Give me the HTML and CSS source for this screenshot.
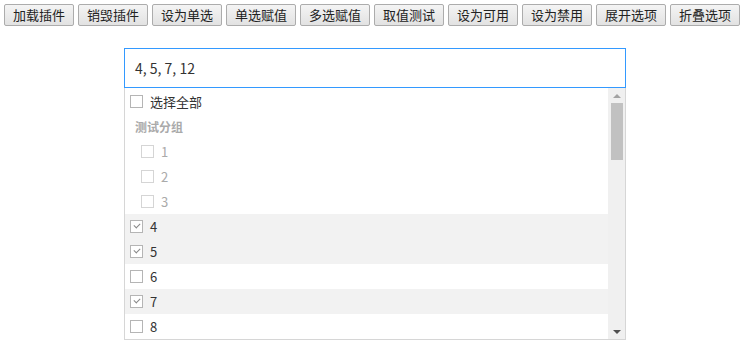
FILE: index.html
```html
<!DOCTYPE html>
<html lang="zh-CN">
<head>
    <meta charset="UTF-8">
    <title>多选下拉测试</title>
    <link rel="stylesheet" href="styles.css">
</head>
<body>
    <div class="toolbar">
        <button class="btn">加载插件</button>
        <button class="btn">销毁插件</button>
        <button class="btn">设为单选</button>
        <button class="btn">单选赋值</button>
        <button class="btn">多选赋值</button>
        <button class="btn">取值测试</button>
        <button class="btn">设为可用</button>
        <button class="btn">设为禁用</button>
        <button class="btn">展开选项</button>
        <button class="btn">折叠选项</button>
    </div>

    <div class="select-box">
        <div class="select-input">4, 5, 7, 12</div>
        <div class="dropdown">
            <ul class="options">
                <li class="option"><span class="check"></span>选择全部</li>
                <li class="group">测试分组</li>
                <li class="option disabled sub"><span class="check"></span>1</li>
                <li class="option disabled sub"><span class="check"></span>2</li>
                <li class="option disabled sub"><span class="check"></span>3</li>
                <li class="option selected"><span class="check checked"></span>4</li>
                <li class="option selected"><span class="check checked"></span>5</li>
                <li class="option"><span class="check"></span>6</li>
                <li class="option selected"><span class="check checked"></span>7</li>
                <li class="option"><span class="check"></span>8</li>
            </ul>
            <div class="scrollbar">
                <span class="arrow up"></span>
                <div class="track"><div class="thumb"></div></div>
                <span class="arrow down"></span>
            </div>
        </div>
    </div>
</body>
</html>
```

FILE: styles.css
```css
body {
    font-family: "Noto Sans CJK SC", "Microsoft YaHei", sans-serif;
    font-size: 13px;
    color: #333;
    background: #fff;
    margin: 0;
    padding: 0;
}

.toolbar {
    display: flex;
    gap: 4px;
    padding: 4px;
}

.btn {
    font-family: inherit;
    font-size: 13px;
    color: #222;
    height: 22px;
    width: 70px;
    padding: 0;
    line-height: 20px;
    border: 1px solid #acacac;
    border-radius: 2px;
    background: linear-gradient(to bottom, #f4f4f4, #e2e2e2);
}

.select-box {
    width: 502px;
    margin: 18px auto 0;
}

.select-input {
    height: 38px;
    line-height: 38px;
    border: 1px solid #3399ff;
    padding: 0 10px;
    font-size: 14px;
    color: #333;
}

.dropdown {
    display: flex;
    height: 251px;
    border: 1px solid #d6d6d6;
    border-top: none;
    overflow: hidden;
}

.options {
    flex: 1;
    list-style: none;
    margin: 0;
    padding: 1px 0 0;
}

.option,
.group {
    height: 25px;
    line-height: 25px;
    padding-left: 5px;
    display: flex;
    align-items: center;
}

.group {
    padding-left: 10px;
    color: #aaa;
    font-weight: bold;
    font-size: 12px;
}

.option.sub {
    padding-left: 16px;
}

.option.disabled {
    color: #aaa;
}

.option.selected {
    background: #f2f2f2;
}

.check {
    width: 11px;
    height: 11px;
    border: 1px solid #b5b5b5;
    background: #fff;
    margin-right: 7px;
    position: relative;
}

.option.disabled .check {
    border-color: #d5d5d5;
}

.check.checked::after {
    content: "";
    position: absolute;
    left: 3px;
    top: 2px;
    width: 5px;
    height: 3px;
    border-left: 1px solid #888;
    border-bottom: 1px solid #888;
    transform: rotate(-45deg);
}

.scrollbar {
    width: 17px;
    background: #f0f0f0;
    display: flex;
    flex-direction: column;
    align-items: center;
}

.arrow {
    width: 0;
    height: 0;
    border-left: 4px solid transparent;
    border-right: 4px solid transparent;
    margin: 6px 0 5px;
}

.arrow.up {
    border-bottom: 4px solid #a3a3a3;
}

.arrow.down {
    border-top: 4px solid #505050;
}

.track {
    flex: 1;
    width: 100%;
    display: flex;
    justify-content: center;
}

.thumb {
    width: 12px;
    height: 57px;
    background: #c1c1c1;
}
```
